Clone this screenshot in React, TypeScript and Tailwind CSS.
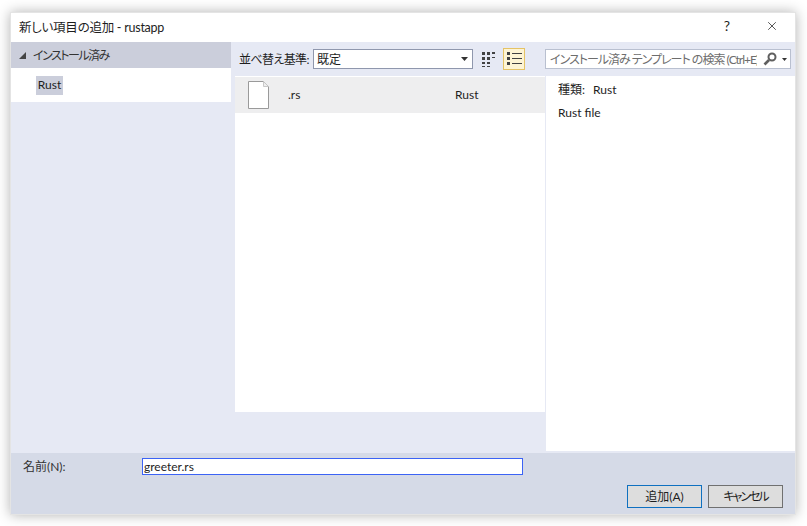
import React from "react";
import { X } from "lucide-react";

const font = "font-['Lato','Noto_Sans_CJK_JP',sans-serif] [font-feature-settings:'palt']";

const FileIcon = () => (
  <svg width="21" height="28" viewBox="0 0 21 28" className="block">
    <path d="M.5.5h15l5 5v22H.5z" fill="#fff" stroke="#9a9a9a" />
    <path d="M15.5.5v5h5" fill="#eee" stroke="#c8c8c8" />
  </svg>
);

const GridIcon = () => (
  <svg width="14" height="15" viewBox="0 0 14 15" className="block" fill="#424242">
    <path d="M0 0h3v3H0zM5 0h3v3H5zM10 0h3v2h-3zM0 5h3v3H0zM5 5h3v3H5zM10 5h3v1h-3zM0 10h3v2H0zM5 10h3v2H5zM0 14h3v1H0zM5 14h3v1H5z" />
  </svg>
);

const ListIcon = () => (
  <svg width="15" height="14" viewBox="0 0 15 14" className="block" fill="#424242">
    <path d="M0 0h3v3H0zM5 1h10v1H5zM0 5h3v3H0zM5 6h10v1H5zM0 10h3v3H0zM5 11h10v1H5z" />
  </svg>
);

const SearchIcon = () => (
  <svg width="14" height="14" viewBox="0 0 14 14" className="block" fill="none" stroke="#5f5f5f">
    <circle cx="9" cy="5" r="3.5" strokeWidth="2" />
    <path d="M6 8 1.5 12.5" strokeWidth="2.6" />
  </svg>
);

const Caret = ({ small }: { small?: boolean }) => (
  <svg width={small ? 5 : 7} height={small ? 3 : 4} viewBox="0 0 7 4" className="block" fill="#333">
    <path d="M0 0h7L3.5 4z" />
  </svg>
);

export default function App() {
  return (
    <div className={`h-[526px] w-[807px] overflow-hidden bg-white pl-[10px] pt-3 text-[12px] leading-[16px] text-[#1e1e1e] ${font}`}>
      <div className="flex h-[503px] w-[786px] flex-col border border-[#e4e4e4] bg-[#e6e9f4] shadow-[0_0_12px_rgba(0,0,0,0.3)]">
        {/* Title bar */}
        <div className="flex h-[29px] shrink-0 items-center bg-white pl-2">
          <span className="text-[12.5px] tracking-[-0.25px]">新しい項目の追加 - rustapp</span>
          <span className="ml-auto mb-[3px] w-[14px] text-center text-[14px]">?</span>
          <X className="mb-[3px] ml-[31px] mr-[16px] h-[14px] w-[14px] text-[#222]" strokeWidth={1.3} />
        </div>

        <div className="flex min-h-0 flex-1">
          {/* Left tree */}
          <div className="w-[220px] shrink-0">
            <div className="flex h-[26px] items-center bg-[#cbcedb] pl-[8px] text-[#333]">
              <svg width="7" height="7" viewBox="0 0 7 7" className="mr-[7px]" fill="#444">
                <path d="M7 0v7H0z" />
              </svg>
              <span className="pt-[2px] tracking-[-1.5px]">インストール済み</span>
            </div>
            <div className="flex h-[34px] items-center bg-white pl-[25px]">
              <span className="flex h-[19px] w-[27px] items-center justify-center bg-[#cbcedb]">Rust</span>
            </div>
          </div>

          {/* Middle column */}
          <div className="flex w-[314px] shrink-0 flex-col pl-[4px]">
            <div className="flex h-[34px] shrink-0 items-center pl-[4px]">
              <span className="w-[74px] whitespace-nowrap pt-px tracking-[-0.6px]">並べ替え基準:</span>
              <div className="flex h-[20px] w-[160px] items-center justify-between border border-[#8f97ad] bg-white pl-[3px] pr-[4px]">
                <span className="pt-px">既定</span>
                <Caret />
              </div>
              <div className="ml-[9px]">
                <GridIcon />
              </div>
              <div className="ml-[7px] flex h-[22px] w-[22px] items-center justify-center border border-[#e5c365] bg-[#fdf4d4]">
                <ListIcon />
              </div>
            </div>
            <div className="h-[336px] w-[310px] bg-white pt-px">
              <div className="flex h-[36px] items-center bg-[#eeeeef] pl-[13px]">
                <FileIcon />
                <span className="ml-[19px] w-[167px]">.rs</span>
                <span>Rust</span>
              </div>
            </div>
          </div>

          {/* Right column */}
          <div className="flex min-w-0 flex-1 flex-col pb-[2px]">
            <div className="flex h-[34px] shrink-0 items-center">
              <div className="flex h-[20px] w-[246px] items-center overflow-hidden border border-[#b9c0d0] bg-white pl-[4px] text-[#6d6d6d]">
                <span className="w-[207px] shrink-0 overflow-hidden whitespace-nowrap pt-px tracking-[-1px]">インストール済み テンプレート の検索 (Ctrl+E)</span>
                <span className="ml-[6px] shrink-0"><SearchIcon /></span>
                <span className="ml-[5px] shrink-0"><Caret small /></span>
              </div>
            </div>
            <div className="ml-px flex-1 bg-white pl-[12px] pt-[6px]">
              <div className="flex h-[16px] items-center">
                <span>種類:</span>
                <span className="ml-[8px]">Rust</span>
              </div>
              <div className="mt-[7px]">Rust file</div>
            </div>
          </div>
        </div>

        {/* Footer */}
        <div className="h-[61px] shrink-0 bg-[#d5dae7] pl-[12px] pt-[5px]">
          <div className="flex h-[17px] items-center">
            <span className="w-[119px] text-[#333]">名前(N):</span>
            <div className="flex h-[17px] w-[381px] items-center border border-[#3c63f5] bg-white pl-px">greeter.rs</div>
          </div>
          <div className="mt-[10px] flex justify-end gap-[6px] pr-[12px]">
            <button className="h-[23px] w-[75px] border border-[#0f70c0] bg-[#dddddd]">追加(A)</button>
            <button className="h-[23px] w-[75px] border border-[#707070] bg-[#dddddd] tracking-[-2px]">キャンセル</button>
          </div>
        </div>
      </div>
    </div>
  );
}
